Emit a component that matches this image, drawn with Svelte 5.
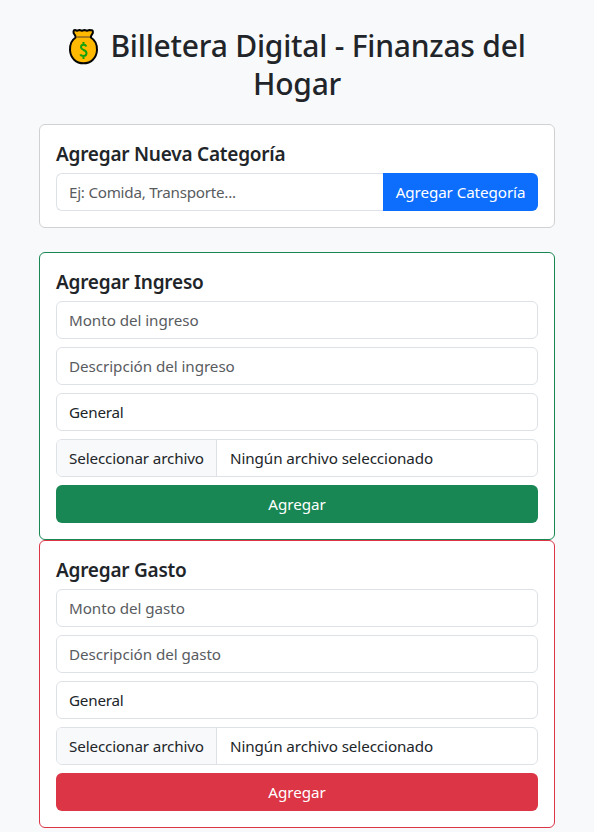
<script>
  const forms = [
    { kind: 'income', title: 'Agregar Ingreso', noun: 'ingreso' },
    { kind: 'expense', title: 'Agregar Gasto', noun: 'gasto' }
  ];
</script>

<main>
  <h1>
    <svg class="bag" viewBox="0 0 32 37" aria-hidden="true">
      <path d="M7.700 9.500 7.300 7.800 5.700 5.200Q5 2 7 2l2 .7L11.500 2l2.500.7L16.500 2l2.500.7L21.500 2l2 .3Q25.300 2 24.800 5L23.200 7.800 22.800 9.500C27 12 29.300 16.500 29 22.300C28.500 30 23 35.300 15.500 35.300S2.500 30 2 22.300C1.700 16.500 3.700 12 7.700 9.500Z" fill="#ffb900" stroke="#050505" stroke-width="2" stroke-linejoin="round" />
      <path d="M8.500 9H22" stroke="#936b24" stroke-width="1.600" />
      <path d="M18.300 18.500Q17.800 16.800 15.500 16.800Q13 16.800 13 19.200C13 22.500 18.500 21.500 18.500 25Q18.500 28 15.500 28Q13 28 12.300 26.300M15.500 14v2.800M15.500 28v3" fill="none" stroke="#13a10e" stroke-width="2" />
    </svg><span>Billetera Digital - Finanzas del</span><br /><span>Hogar</span>
  </h1>

  <section class="card category">
    <h2>Agregar Nueva Categoría</h2>
    <div class="group">
      <input class="control" type="text" placeholder="Ej: Comida, Transporte..." />
      <button class="primary" type="button">Agregar Categoría</button>
    </div>
  </section>

  {#each forms as form}
    <section class="card {form.kind}">
      <h2>{form.title}</h2>
      <div class="fields">
        <input class="control" type="text" placeholder="Monto del {form.noun}" />
        <input class="control" type="text" placeholder="Descripción del {form.noun}" />
        <div class="control select">General</div>
        <div class="control file">
          <span class="pick">Seleccionar archivo</span>
          <span class="name">Ningún archivo seleccionado</span>
        </div>
        <button class={form.kind} type="button">Agregar</button>
      </div>
    </section>
  {/each}
</main>

<style>
  :global(body) { margin: 0; background: #f8f9fb; overflow: hidden; }
  * { box-sizing: border-box; }
  main {
    height: 832px;
    padding: 27px 39px 0;
    background: #f8f9fb;
    color: #212529;
    font: 15.200px/24px "Noto Sans", "Open Sans", sans-serif;
    letter-spacing: -0.050px;
  }
  h1 {
    height: 73px;
    margin: 0 0 24px;
    text-align: center;
    font-size: 30px;
    line-height: 37px;
    font-weight: 550;
    white-space: nowrap;
    letter-spacing: -0.220px;
  }
  .bag { width: 32px; height: 37px; margin-right: 10px; vertical-align: -7.500px; }
  .card { border: 1px solid #cfd1d3; border-radius: 6px; padding: 16px; background: #fff; }
  .category { margin-bottom: 24px; }
  .card.income { border-color: #198754; }
  .card.expense { border-color: #dc3545; }
  h2 { margin: 0; padding-top: 1px; height: 32px; font-size: 19px; line-height: 24px; font-weight: 600; letter-spacing: -0.230px; }
  .fields { display: flex; flex-direction: column; gap: 8px; }
  .control {
    display: block;
    width: 100%;
    height: 38px;
    padding: 6px 12px;
    border: 1px solid #dee2e6;
    border-radius: 6px;
    background: #fff;
    color: #212529;
    font: inherit;
    letter-spacing: inherit;
    outline: none;
  }
  .control::placeholder { color: #595c5f; opacity: 1; }
  .select { letter-spacing: -0.200px; }
  .group { display: flex; }
  .group .control { flex: 1; min-width: 0; border-right: 0; border-radius: 6px 0 0 6px; letter-spacing: -0.250px; }
  button {
    height: 38px;
    padding: 0;
    border: 0;
    border-radius: 6px;
    color: #fff;
    font: inherit;
    letter-spacing: inherit;
  }
  .primary { width: 155px; border-radius: 0 6px 6px 0; background: #0d6efd; letter-spacing: -0.080px; }
  button.income { background: #198754; }
  button.expense { background: #dc3545; }
  .file { display: flex; padding: 0; overflow: hidden; white-space: nowrap; }
  .pick { width: 160px; padding: 6px 0 6px 12px; border-right: 1px solid #dee2e6; background: #f8f9fa; letter-spacing: -0.120px; }
  .name { padding: 6px 12px 6px 13px; letter-spacing: -0.080px; }
</style>
